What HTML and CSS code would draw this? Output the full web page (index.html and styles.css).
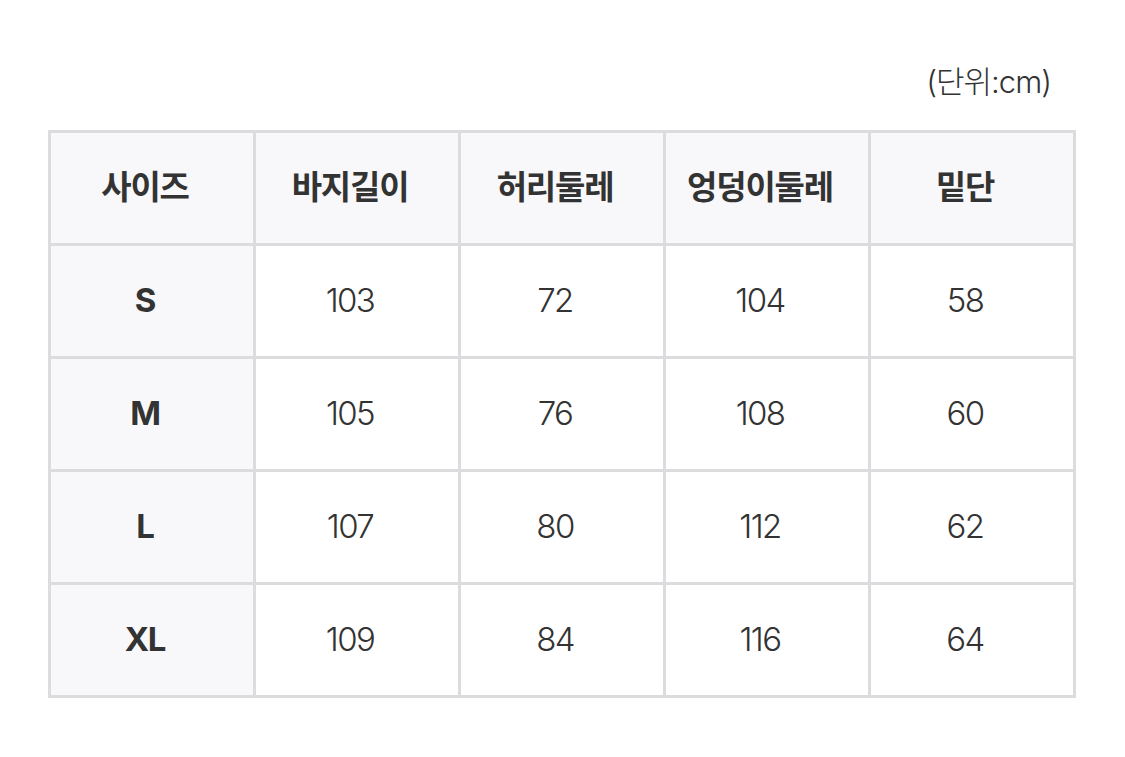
FILE: index.html
```html
<!DOCTYPE html>
<html lang="ko">
<head>
<meta charset="utf-8">
<link rel="stylesheet" href="styles.css">
</head>
<body>
<div class="page">
  <div class="unit">(단위:cm)</div>
  <table class="size-table">
    <thead>
      <tr>
        <th>사이즈</th>
        <th>바지길이</th>
        <th>허리둘레</th>
        <th>엉덩이둘레</th>
        <th>밑단</th>
      </tr>
    </thead>
    <tbody>
      <tr><th>S</th><td>103</td><td>72</td><td>104</td><td>58</td></tr>
      <tr><th>M</th><td>105</td><td>76</td><td>108</td><td>60</td></tr>
      <tr><th>L</th><td>107</td><td>80</td><td>112</td><td>62</td></tr>
      <tr><th>XL</th><td>109</td><td>84</td><td>116</td><td>64</td></tr>
    </tbody>
  </table>
</div>
</body>
</html>
```
FILE: styles.css
```css
html, body {
  margin: 0;
  padding: 0;
  background: #ffffff;
}
body {
  font-family: "Inter", "Noto Sans CJK KR", sans-serif;
  color: #333333;
}
.page {
  padding: 62px 49px 0 48px;
}
.unit {
  text-align: right;
  font-size: 31px;
  font-weight: 300;
  letter-spacing: -1px;
  line-height: 40px;
  padding-right: 25px;
  margin-bottom: 28px;
}
.size-table {
  width: 1028px;
  border-collapse: collapse;
  table-layout: fixed;
  border: 3px solid #dcdcdf;
}
.size-table th,
.size-table td {
  border: 3px solid #dcdcdf;
  height: 107px;
  padding: 0 14px 3px 0;
  text-align: center;
  vertical-align: middle;
  font-size: 33px;
  line-height: 40px;
  letter-spacing: -1.6px;
}
.size-table th {
  background: #f8f8fa;
  font-weight: 700;
  letter-spacing: -1.2px;
}
.size-table td {
  font-weight: 300;
}
```
